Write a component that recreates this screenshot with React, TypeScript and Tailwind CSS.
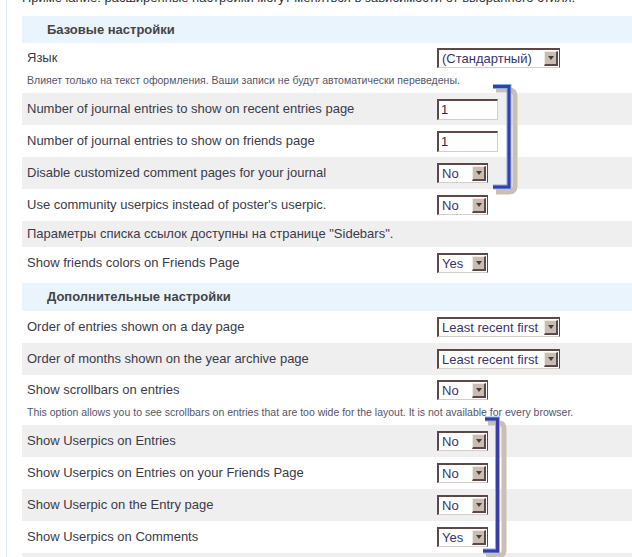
import React from 'react';

type Row =
  | { kind: 'header'; title: string; mt?: boolean }
  | { kind: 'select'; label: string; value: string; width: 'sm' | 'lg'; note?: string; gray?: boolean }
  | { kind: 'input'; label: string; value: string; gray?: boolean }
  | { kind: 'text'; label: string; gray?: boolean };

const ROWS: Row[] = [
  { kind: 'header', title: 'Базовые настройки' },
  { kind: 'select', label: 'Язык', value: '(Стандартный)', width: 'lg', note: 'Влияет только на текст оформления. Ваши записи не будут автоматически переведены.' },
  { kind: 'input', label: 'Number of journal entries to show on recent entries page', value: '1', gray: true },
  { kind: 'input', label: 'Number of journal entries to show on friends page', value: '1' },
  { kind: 'select', label: 'Disable customized comment pages for your journal', value: 'No', width: 'sm', gray: true },
  { kind: 'select', label: "Use community userpics instead of poster's userpic.", value: 'No', width: 'sm' },
  { kind: 'text', label: 'Параметры списка ссылок доступны на странице "Sidebars".', gray: true },
  { kind: 'select', label: 'Show friends colors on Friends Page', value: 'Yes', width: 'sm' },
  { kind: 'header', title: 'Дополнительные настройки', mt: true },
  { kind: 'select', label: 'Order of entries shown on a day page', value: 'Least recent first', width: 'lg' },
  { kind: 'select', label: 'Order of months shown on the year archive page', value: 'Least recent first', width: 'lg', gray: true },
  { kind: 'select', label: 'Show scrollbars on entries', value: 'No', width: 'sm', note: 'This option allows you to see scrollbars on entries that are too wide for the layout. It is not available for every browser.' },
  { kind: 'select', label: 'Show Userpics on Entries', value: 'No', width: 'sm', gray: true },
  { kind: 'select', label: 'Show Userpics on Entries on your Friends Page', value: 'No', width: 'sm' },
  { kind: 'select', label: 'Show Userpic on the Entry page', value: 'No', width: 'sm', gray: true },
  { kind: 'select', label: 'Show Userpics on Comments', value: 'Yes', width: 'sm' },
  { kind: 'text', label: '', gray: true },
];

function FakeSelect({ value, width }: { value: string; width: 'sm' | 'lg' }) {
  return (
    <div
      className={`flex h-[20px] items-stretch bg-white border-t-2 border-l-2 border-r border-b border-t-[#5c4848] border-l-[#5c4848] border-r-[#5c4848] border-b-[#d6cec6] ${
        width === 'lg' ? 'w-[123px]' : 'w-[51px]'
      }`}
    >
      <span className="flex-1 pl-[3px] text-[13px] leading-[17px] text-[#36366a] whitespace-nowrap overflow-hidden">{value}</span>
      <span className="my-[1px] mr-[1px] flex w-[14px] items-center justify-center bg-[#c9bdb1] border-t border-l border-t-[#efe9e3] border-l-[#efe9e3] border-r-2 border-b-2 border-r-[#5c4848] border-b-[#5c4848]">
        <span className="block h-0 w-0 border-x-[3.5px] border-t-[4px] border-x-transparent border-t-[#4a3a3a]" />
      </span>
    </div>
  );
}

function FakeInput({ value }: { value: string }) {
  return (
    <div className="h-[21px] w-[61px] bg-white border-t-2 border-l-2 border-r border-b border-t-[#5c4848] border-l-[#5c4848] border-r-[#d6cec6] border-b-[#d6cec6] pl-[2px] text-[13px] leading-[18px] text-[#2a2a40]">
      {value}
    </div>
  );
}

export default function App() {
  return (
    <div className="relative h-[557px] w-[632px] overflow-hidden bg-white font-['Liberation_Sans',Arial,sans-serif] text-[13px] text-[#3b3a4a]">
      <div className="ml-[6px] min-h-full border-l border-[#e3ecf6] pl-[15px]">
        <p className="-mt-[10px] mb-[10px] whitespace-nowrap leading-[16px] text-[#333]">
          Примечание: расширенные настройки могут меняться в зависимости от выбранного стиля.
        </p>

        {ROWS.map((row, i) => {
          if (row.kind === 'header') {
            return (
              <div
                key={i}
                className={`flex items-center bg-[#eaf4fd] pl-[25px] font-bold text-[#444] ${row.mt ? 'mt-[4px] h-[28px]' : 'h-[27px]'}`}
              >
                {row.title}
              </div>
            );
          }
          const bg = row.gray ? 'bg-[#efefef]' : 'bg-white';
          if (row.kind === 'text') {
            return (
              <div key={i} className={`flex h-[26px] items-center pl-[5px] whitespace-nowrap ${bg}`}>
                {row.label}
              </div>
            );
          }
          if (row.kind === 'select' && row.note) {
            return (
              <div key={i} className={`pt-[5px] pb-[7px] pl-[5px] ${bg}`}>
                <div className="grid h-[20px] grid-cols-[410px_1fr] items-center">
                  <span className="whitespace-nowrap">{row.label}</span>
                  <FakeSelect value={row.value} width={row.width} />
                </div>
                <p className="mt-[6px] whitespace-nowrap text-[10.5px] leading-[12px] text-[#55556a]">{row.note}</p>
              </div>
            );
          }
          return (
            <div key={i} className={`grid h-[32px] grid-cols-[410px_1fr] items-center pl-[5px] ${bg}`}>
              <span className="whitespace-nowrap">{row.label}</span>
              {row.kind === 'input' ? <FakeInput value={row.value} /> : <FakeSelect value={row.value} width={row.width} />}
            </div>
          );
        })}
      </div>

      {/* bracket marks drawn over the form */}
      <svg className="absolute left-0 top-0" width="632" height="557" viewBox="0 0 632 557">
        <path d="M496 90 H509 Q515 90 515 96 V186 Q515 192 509 192 H496" fill="none" stroke="#cbbfb3" strokeWidth="5" />
        <path d="M493 86.5 H509 V187 H493" fill="none" stroke="#7fb0ee" strokeWidth="5" />
        <path d="M493 86.5 H509 V187 H493" fill="none" stroke="#3c3ca6" strokeWidth="3" />

        <path d="M488 423 H499 Q504 423 504 429 V550 Q504 556 498 556 H486" fill="none" stroke="#cbbfb3" strokeWidth="5" />
        <path d="M485 419 H497.5 V551 H483" fill="none" stroke="#7fb0ee" strokeWidth="5" />
        <path d="M485 419 H497.5 V551 H483" fill="none" stroke="#3c3ca6" strokeWidth="3" />
      </svg>
    </div>
  );
}
